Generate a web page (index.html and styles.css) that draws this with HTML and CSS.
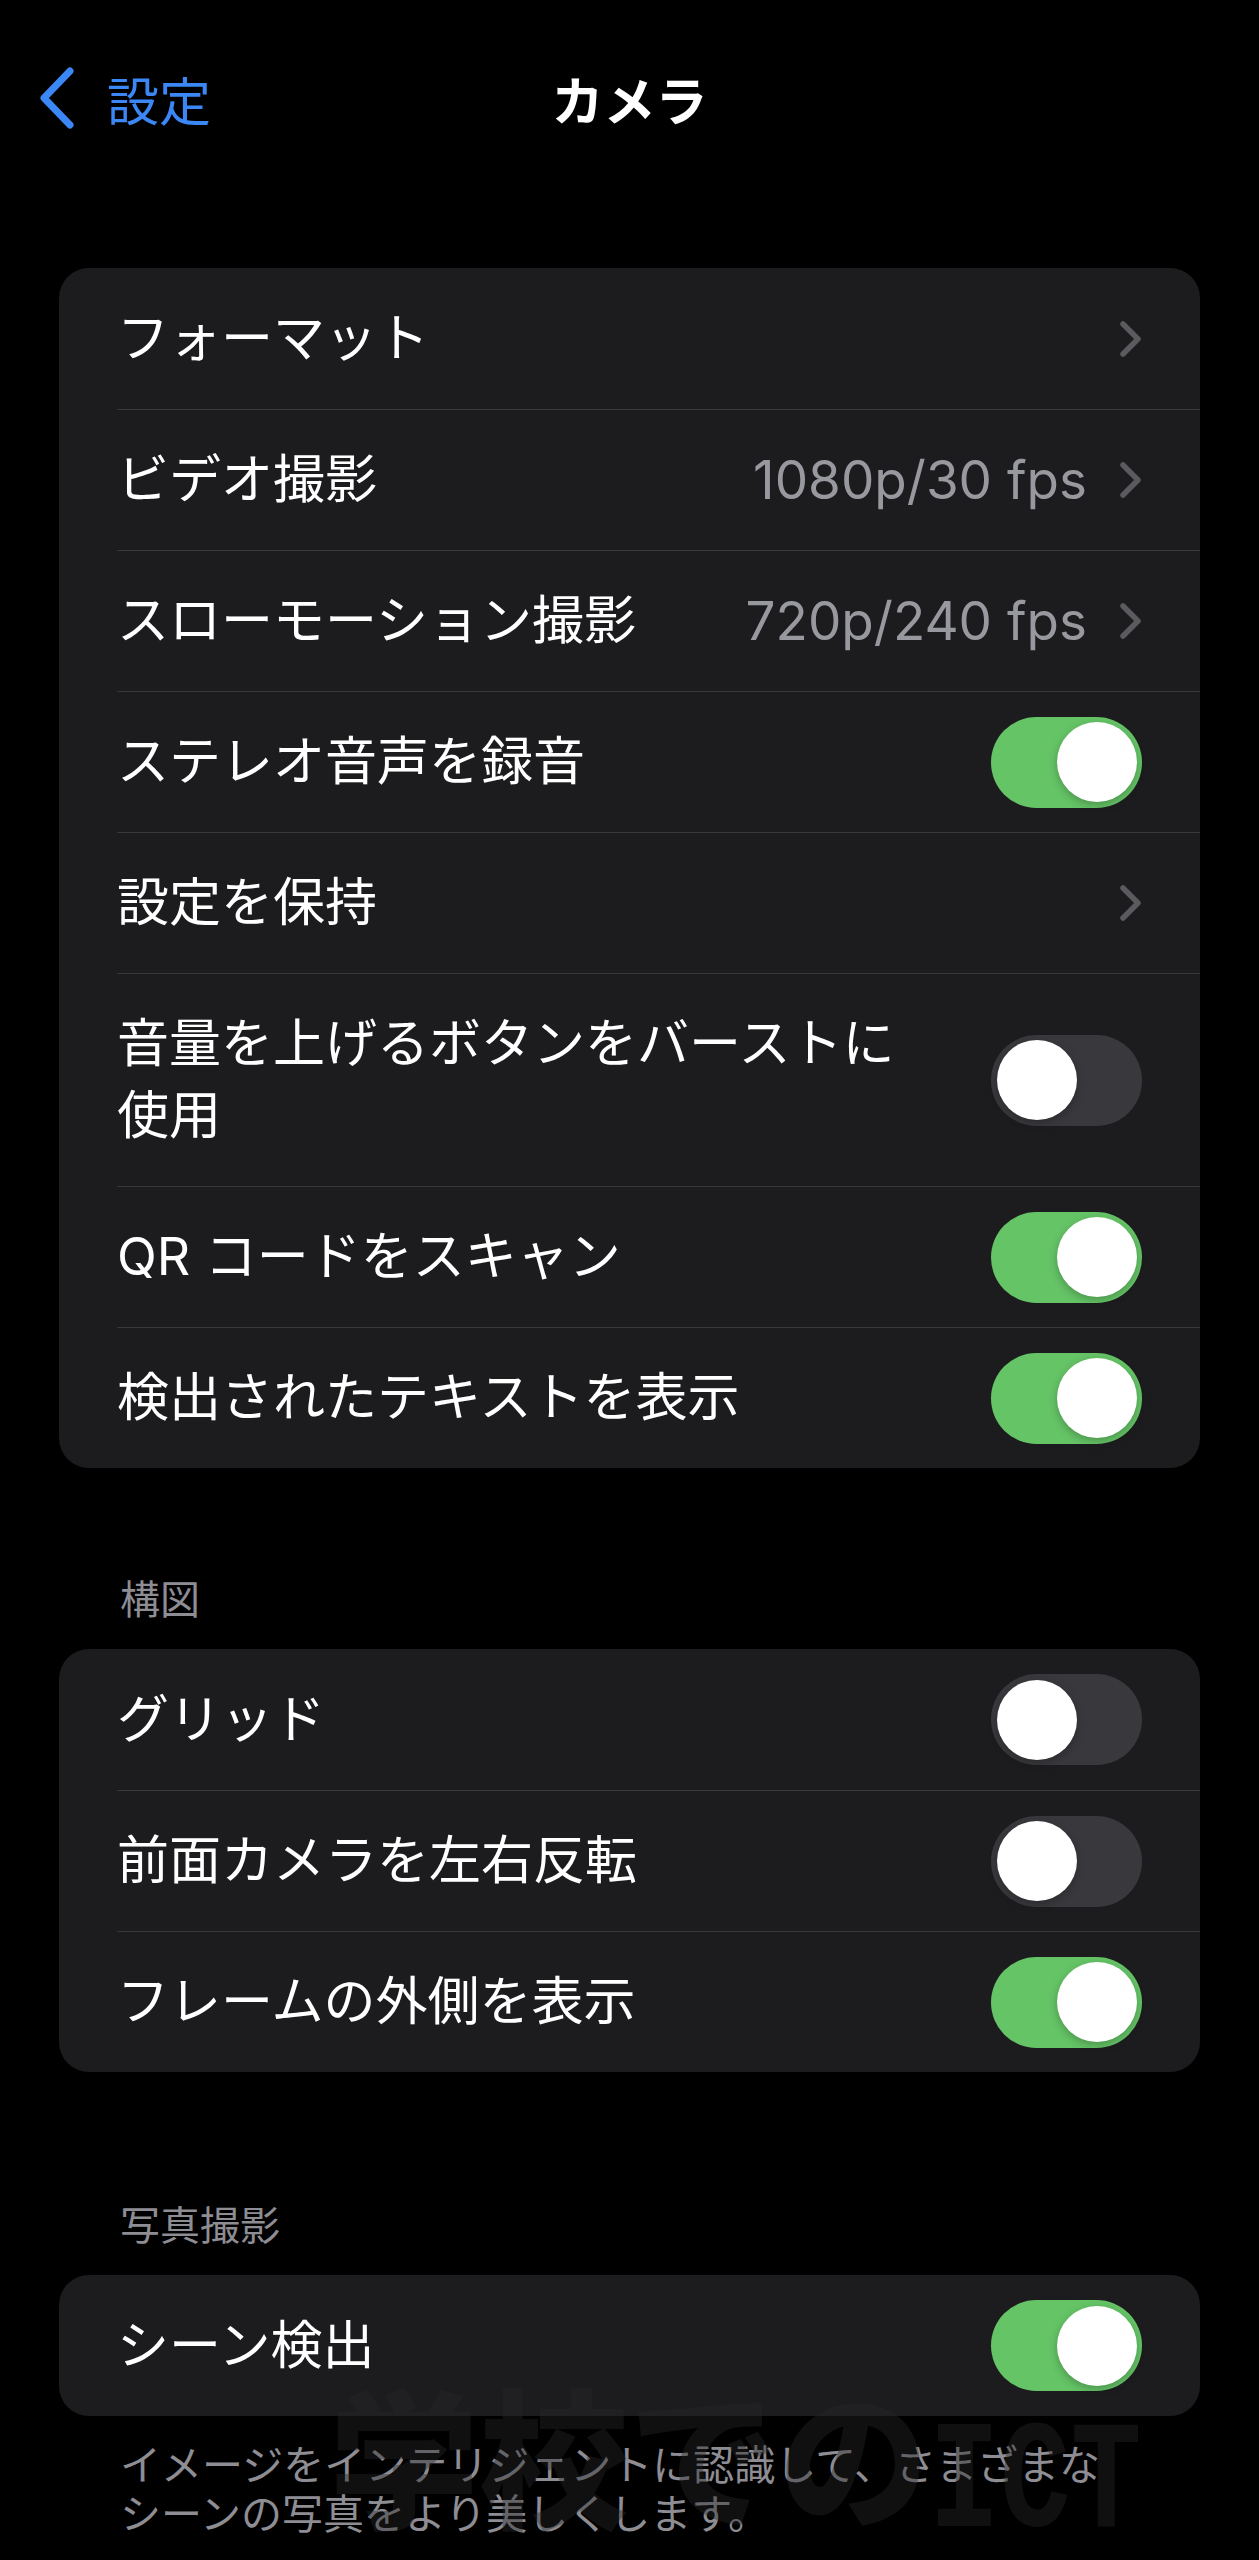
FILE: index.html
```html
<!DOCTYPE html>
<html lang="ja">
<head>
<meta charset="UTF-8">
<meta name="viewport" content="width=device-width, initial-scale=1.0">
<title>カメラ</title>
<link rel="stylesheet" href="styles.css">
</head>
<body>

<header class="nav">
  <a class="back" href="#">
    <svg class="back-icon" width="36" height="62" viewBox="0 0 36 62"><polyline points="31,4 5,31 31,58" fill="none" stroke="#3a87f5" stroke-width="7" stroke-linecap="round" stroke-linejoin="round"/></svg>
    <span>設定</span>
  </a>
  <h1 class="title">カメラ</h1>
  <div></div>
</header>

<main class="list">

  <section class="card first">
    <div class="row"><div class="row-body">
      <span class="label">フォーマット</span>
      <svg class="chev" width="23" height="38" viewBox="0 0 23 38"><polyline points="4,4 19,19 4,34" fill="none" stroke="#5a5a5f" stroke-width="5.5" stroke-linecap="round" stroke-linejoin="round"/></svg>
    </div></div>
    <div class="row"><div class="row-body">
      <span class="label">ビデオ撮影</span>
      <span class="value">1080p/30 fps</span>
      <svg class="chev" width="23" height="38" viewBox="0 0 23 38"><polyline points="4,4 19,19 4,34" fill="none" stroke="#5a5a5f" stroke-width="5.5" stroke-linecap="round" stroke-linejoin="round"/></svg>
    </div></div>
    <div class="row"><div class="row-body">
      <span class="label">スローモーション撮影</span>
      <span class="value">720p/240 fps</span>
      <svg class="chev" width="23" height="38" viewBox="0 0 23 38"><polyline points="4,4 19,19 4,34" fill="none" stroke="#5a5a5f" stroke-width="5.5" stroke-linecap="round" stroke-linejoin="round"/></svg>
    </div></div>
    <div class="row"><div class="row-body">
      <span class="label">ステレオ音声を録音</span>
      <span class="toggle on"><span class="knob"></span></span>
    </div></div>
    <div class="row"><div class="row-body">
      <span class="label">設定を保持</span>
      <svg class="chev" width="23" height="38" viewBox="0 0 23 38"><polyline points="4,4 19,19 4,34" fill="none" stroke="#5a5a5f" stroke-width="5.5" stroke-linecap="round" stroke-linejoin="round"/></svg>
    </div></div>
    <div class="row"><div class="row-body">
      <span class="label">音量を上げるボタンをバーストに使用</span>
      <span class="toggle"><span class="knob"></span></span>
    </div></div>
    <div class="row"><div class="row-body">
      <span class="label">QR コードをスキャン</span>
      <span class="toggle on"><span class="knob"></span></span>
    </div></div>
    <div class="row"><div class="row-body">
      <span class="label">検出されたテキストを表示</span>
      <span class="toggle on"><span class="knob"></span></span>
    </div></div>
  </section>

  <h2 class="section-title composition">構図</h2>
  <section class="card">
    <div class="row"><div class="row-body">
      <span class="label">グリッド</span>
      <span class="toggle"><span class="knob"></span></span>
    </div></div>
    <div class="row"><div class="row-body">
      <span class="label">前面カメラを左右反転</span>
      <span class="toggle"><span class="knob"></span></span>
    </div></div>
    <div class="row"><div class="row-body">
      <span class="label">フレームの外側を表示</span>
      <span class="toggle on"><span class="knob"></span></span>
    </div></div>
  </section>

  <div class="photo">
    <h2 class="section-title">写真撮影</h2>
    <section class="card">
      <div class="row"><div class="row-body">
        <span class="label">シーン検出</span>
        <span class="toggle on"><span class="knob"></span></span>
      </div></div>
    </section>
    <p class="footer">イメージをインテリジェントに認識して、さまざまなシーンの写真をより美しくします。</p>
    <div class="watermark">学校での<span class="wm-latin">ICT</span></div>
  </div>

</main>

</body>
</html>
```

FILE: styles.css
```css
body{
    margin:0;
    background:#000;
    color:#fff;
    font-family:Inter,"Noto Sans CJK JP",sans-serif;
    font-size:52px;
}

.nav{
    height:196px;
    display:grid;
    grid-template-columns:1fr auto 1fr;
    align-items:center;
}

.back{
    display:flex;
    align-items:center;
    gap:32px;
    padding-left:39px;
    color:#3a87f5;
    text-decoration:none;
    font-size:52px;
}

.back-icon{
    display:block;
}

.title{
    margin:0;
    font-size:52px;
    font-weight:700;
}

.list{
    padding:0 59px;
}

.card{
    background:#1c1c1e;
    border-radius:30px;
    overflow:hidden;
}

.card.first{
    margin-top:72px;
}

.row{
    padding-left:58px;
}

.row-body{
    display:flex;
    align-items:center;
    box-sizing:border-box;
    min-height:141px;
    padding-right:58px;
}

.row + .row .row-body{
    border-top:1px solid #38383a;
}

.label{
    flex:1;
    margin-right:64px;
    padding:34px 0;
    line-height:72px;
}

.value{
    color:#98989f;
    margin-right:32px;
    font-size:53px;
}

.chev{
    display:block;
    flex-shrink:0;
}

.toggle{
    position:relative;
    flex-shrink:0;
    width:151px;
    height:91px;
    border-radius:46px;
    background:#39393d;
}

.toggle.on{
    background:#65c466;
}

.knob{
    position:absolute;
    top:5.5px;
    left:5.5px;
    width:80px;
    height:80px;
    border-radius:50%;
    background:#fff;
    box-shadow:0 3px 8px rgba(0,0,0,0.25);
}

.toggle.on .knob{
    left:65.5px;
}

.section-title{
    margin:130px 0 25px 61px;
    font-size:40px;
    line-height:48px;
    font-weight:400;
    color:#8d8d93;
}

.section-title.composition{
    margin-top:108px;
}

.photo{
    position:relative;
}

.footer{
    margin:25px 0 0 61px;
    width:1000px;
    font-size:41px;
    line-height:49px;
    color:#8d8d93;
}

.watermark{
    position:absolute;
    left:270px;
    top:186px;
    font-size:150px;
    font-weight:900;
    line-height:1;
    color:rgba(40,40,40,0.4);
    white-space:nowrap;
    pointer-events:none;
}

.wm-latin{
    display:inline-block;
    font-family:"Liberation Mono",monospace;
    font-size:118px;
    transform:scaleY(1.3);
}
```
